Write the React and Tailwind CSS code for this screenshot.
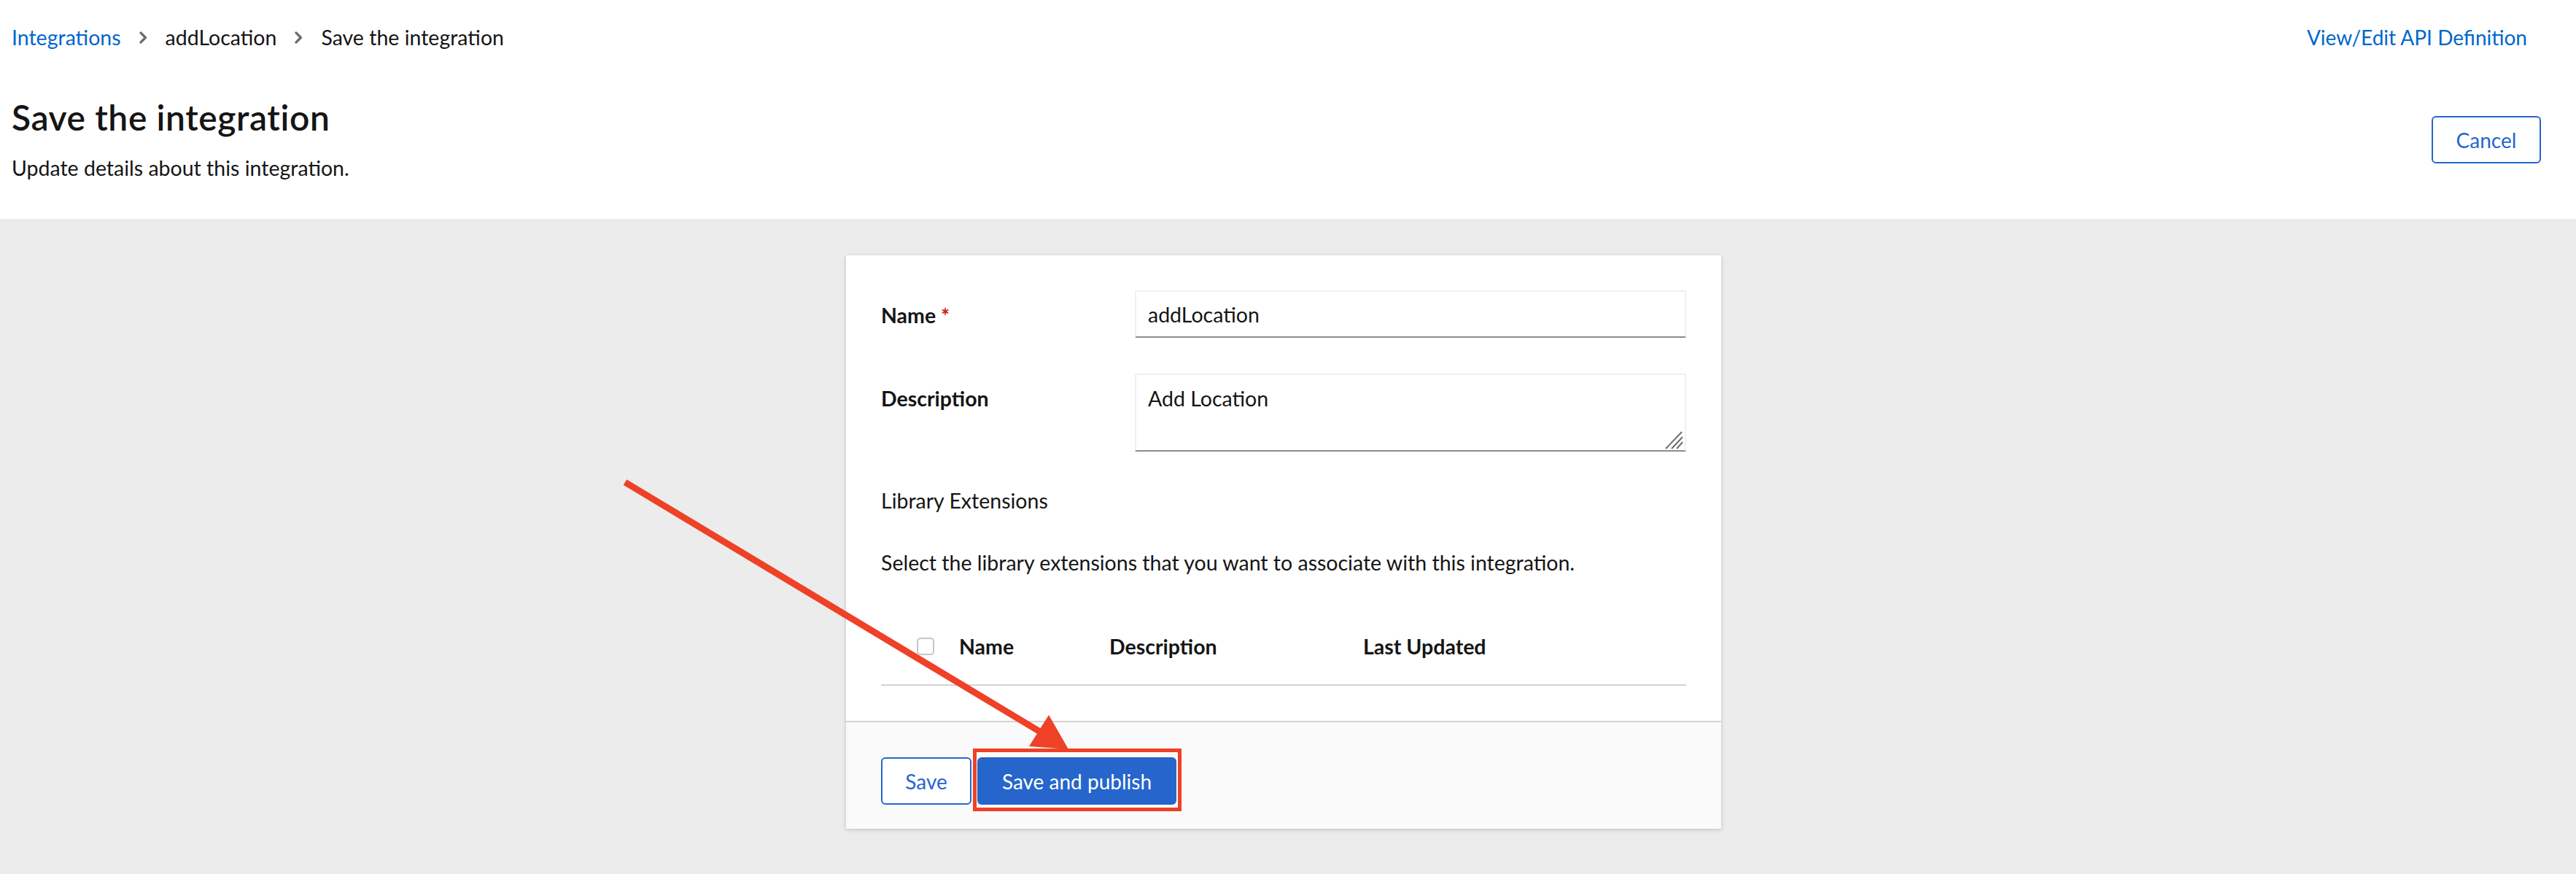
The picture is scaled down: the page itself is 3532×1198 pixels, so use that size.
import React from "react";

function Chevron() {
  return (
    <svg width="11" height="17" viewBox="0 0 11 17" className="mx-[25px] shrink-0">
      <polyline points="2,2 8.5,8.5 2,15" fill="none" stroke="#6a6e73" strokeWidth="3.2" strokeLinecap="round" strokeLinejoin="round" />
    </svg>
  );
}

export default function App() {
  return (
    <div className="relative min-h-[1198px] w-full bg-[#ececec] font-['Lato',sans-serif] text-[#151515]">
      {/* Header */}
      <header className="flex h-[300px] justify-between bg-white pl-[16px] pr-[48px] pt-[31px]">
        <div className="flex flex-col">
          <nav className="flex h-[40px] items-center text-[28.5px] leading-[40px]">
            <span className="text-[#0066cc]">Integrations</span>
            <Chevron />
            <span>addLocation</span>
            <Chevron />
            <span>Save the integration</span>
          </nav>
          <h1 className="mt-[62px] text-[48px] font-semibold leading-[56px] tracking-[0.6px]">Save the integration</h1>
          <p className="mt-[21px] text-[28.5px] leading-[40px]">Update details about this integration.</p>
        </div>
        <div className="flex flex-col items-end">
          <span className="mr-[19px] h-[40px] text-[28px] leading-[40px] text-[#0066cc]">View/Edit API Definition</span>
          <button className="mt-[88px] flex h-[65px] w-[150px] items-center justify-center rounded-[6px] border-2 border-[#2666cc] bg-white text-[28px] text-[#2666cc]">
            Cancel
          </button>
        </div>
      </header>

      {/* Card */}
      <div className="flex justify-center pr-[12px] pt-[50px] pb-[62px]">
        <div className="w-[1200px] bg-white shadow-[0_2px_6px_rgba(3,3,3,0.14),0_0_3px_rgba(3,3,3,0.08)]">
          <div className="px-[48px] pt-[48px] pb-[48px]">
            <div className="grid grid-cols-[348px_756px] gap-y-[49px]">
              <div className="pt-[14px] text-[28.5px] font-bold leading-[40px]">
                Name <span className="font-bold text-[#c9190b]">*</span>
              </div>
              <input
                readOnly
                value="addLocation"
                className="h-[65px] w-full border-2 border-[#f0f0f0] border-b-[#8a8d90] bg-white px-[16px] font-['Lato',sans-serif] text-[28.5px] text-[#151515] outline-none"
              />
              <div className="pt-[14px] text-[28.5px] font-bold leading-[40px]">Description</div>
              <div className="relative h-[107px]">
                <textarea
                  readOnly
                  value="Add Location"
                  className="block h-[107px] w-full resize-none border-2 border-[#f0f0f0] border-b-[#8a8d90] bg-white px-[16px] pt-[15px] font-['Lato',sans-serif] text-[28.5px] leading-[1.2] text-[#151515] outline-none"
                />
                <svg width="28" height="28" viewBox="0 0 28 28" className="pointer-events-none absolute bottom-[3px] right-[4px]">
                  <line x1="4" y1="27" x2="26" y2="4" stroke="#6a6e73" strokeWidth="2" />
                  <line x1="12" y1="27" x2="27" y2="11" stroke="#6a6e73" strokeWidth="2" />
                  <line x1="19" y1="27" x2="27" y2="18" stroke="#6a6e73" strokeWidth="2" />
                </svg>
              </div>
            </div>

            <div className="mt-[47px] text-[28.5px] leading-[40px]">Library Extensions</div>
            <div className="mt-[45px] text-[28.5px] leading-[40px]">
              Select the library extensions that you want to associate with this integration.
            </div>

            <div className="mt-[75px] flex items-center border-b-2 border-[#d2d2d2] pb-[32px] pl-[49px]">
              <span className="h-[24px] w-[24px] shrink-0 rounded-[5px] border-2 border-[#c4c6c8] bg-white" />
              <span className="ml-[34px] w-[206px] text-[28.5px] font-bold leading-[40px]">Name</span>
              <span className="w-[348px] text-[28.5px] font-bold leading-[40px]">Description</span>
              <span className="text-[28.5px] font-bold leading-[40px]">Last Updated</span>
            </div>
          </div>

          <div className="flex gap-[8px] border-t-2 border-[#d2d2d2] bg-[#fafafa] px-[48px] pt-[48px] pb-[33px]">
            <button className="flex h-[65px] w-[124px] items-center justify-center rounded-[6px] border-2 border-[#2666cc] bg-white text-[28px] text-[#2666cc]">
              Save
            </button>
            <div className="relative">
              <button className="flex h-[65px] w-[273px] items-center justify-center rounded-[6px] bg-[#2666cc] text-[28px] text-white">
                Save and publish
              </button>
              <span className="pointer-events-none absolute -bottom-[9px] -left-[6px] -right-[7px] -top-[12px] border-[5px] border-[#ee4127]" />
            </div>
          </div>
        </div>
      </div>

      {/* Annotation arrow */}
      <svg className="pointer-events-none absolute left-0 top-0" width="3532" height="1198" viewBox="0 0 3532 1198">
        <line x1="857" y1="661" x2="1426" y2="1003" stroke="#ee4127" strokeWidth="9" />
        <polygon points="1465,1027 1438,980 1411,1023" fill="#ee4127" />
      </svg>
    </div>
  );
}
